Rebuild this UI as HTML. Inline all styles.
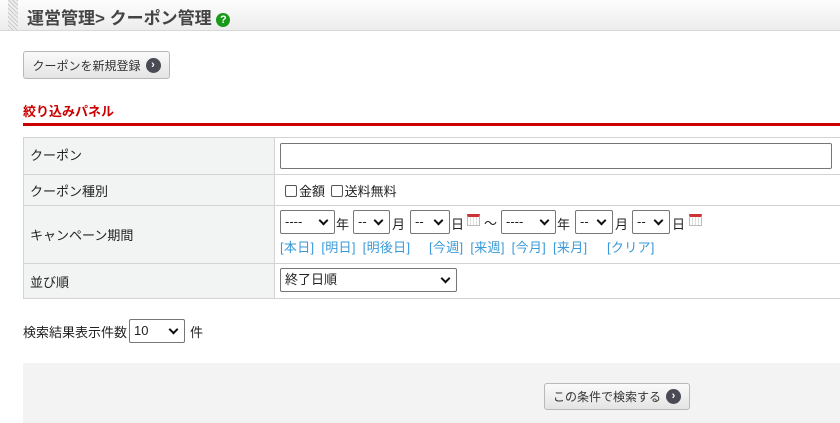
<!DOCTYPE html>
<html><head><meta charset="utf-8"><style>
*{box-sizing:border-box;margin:0;padding:0}
body{width:840px;height:423px;overflow:hidden;background:#fff;font-family:"Liberation Sans","Noto Sans CJK JP",sans-serif;font-size:13px;color:#222;position:relative}
.a{position:absolute}
.hdr{left:0;top:0;width:840px;height:31px;background:linear-gradient(#fdfdfd,#ececec);border-bottom:1px solid #d8d8d8}
.hatch{left:8px;top:0;width:10px;height:30px;background:repeating-linear-gradient(45deg,#ccc 0 1px,#eee 1px 3px)}
.btn{border:1px solid #b8b8b8;border-radius:3px;background:linear-gradient(#fafafa,#e4e4e4);font-size:12px;color:#333;display:flex;align-items:center;justify-content:center;gap:5px}
.ar{width:15px;height:15px;border-radius:50%;background:#4a4a55;color:#fff;font-size:11px;line-height:15px;text-align:center;font-weight:bold}
table{position:absolute;left:23px;top:137px;width:830px;border-collapse:collapse}
td{border:1px solid #d3d3d3;padding:0 6px;vertical-align:middle}
td.l{background:#f2f3f3;width:251px}
.sel{position:absolute;height:24px;border:1px solid #767676;border-radius:2px;background:#fff;font-size:13px;padding-left:4px;line-height:22px}
.sel:after{content:"";position:absolute;right:7px;top:6px;width:5px;height:5px;border-right:2px solid #111;border-bottom:2px solid #111;transform:rotate(45deg)}
.cal{position:absolute;width:13px;height:12px;border:1px solid #bbb;background:repeating-linear-gradient(90deg,#fff 0 2px,#ddd 2px 3px);border-top:3px solid #c33}
.lk{color:#3a9ad9;word-spacing:3px;letter-spacing:0.3px}
.cb{display:inline-block;width:12px;height:12px;border:1px solid #555;border-radius:2px;vertical-align:-1px;margin-right:2px}
</style></head><body>
<div class="a hdr"></div><div class="a hatch"></div>
<div class="a" style="left:27px;top:4px;font-size:17px;font-weight:bold;color:#444">運営管理&gt; クーポン管理 <span style="display:inline-block;width:14px;height:14px;border-radius:50%;background:#1a9a1a;color:#fff;font-size:11px;line-height:14px;text-align:center;vertical-align:1px">?</span></div>
<div class="a btn" style="left:23px;top:51px;width:147px;height:28px">クーポンを新規登録 <span class="ar">›</span></div>
<div class="a" style="left:23px;top:101px;color:#c00;font-weight:bold;font-size:13px">絞り込みパネル</div>
<div class="a" style="left:23px;top:123px;width:817px;height:3px;background:#c00"></div>
<table>
<tr style="height:37px"><td class="l" style="padding-bottom:3px">クーポン</td><td></td></tr>
<tr style="height:31px"><td class="l">クーポン種別</td><td style="padding-left:10px"><span class="cb"></span>金額 <span class="cb" style="margin-left:2px"></span>送料無料</td></tr>
<tr style="height:58px"><td class="l">キャンペーン期間</td><td></td></tr>
<tr style="height:35px"><td class="l">並び順</td><td></td></tr>
</table>
<div class="a" style="left:280px;top:143px;width:552px;height:26px;border:1px solid #767676;border-radius:2px"></div>
<div class="sel" style="left:280px;top:210px;width:55px">----</div><span class="a" style="left:336px;top:214px">年</span>
<div class="sel" style="left:353px;top:210px;width:37px">--</div><span class="a" style="left:392px;top:214px">月</span>
<div class="sel" style="left:410px;top:210px;width:40px">--</div><span class="a" style="left:451px;top:214px">日</span>
<div class="cal" style="left:467px;top:214px"></div><span class="a" style="left:484px;top:213px">～</span>
<div class="sel" style="left:501px;top:210px;width:55px">----</div><span class="a" style="left:557px;top:214px">年</span>
<div class="sel" style="left:575px;top:210px;width:38px">--</div><span class="a" style="left:615px;top:214px">月</span>
<div class="sel" style="left:632px;top:210px;width:38px">--</div><span class="a" style="left:672px;top:214px">日</span>
<div class="cal" style="left:689px;top:214px"></div>
<div class="a lk" style="left:280px;top:237px">[本日] [明日] [明後日]</div>
<div class="a lk" style="left:429px;top:237px">[今週] [来週] [今月] [来月]</div>
<div class="a lk" style="left:607px;top:237px">[クリア]</div>
<div class="sel" style="left:280px;top:268px;width:177px">終了日順</div>
<div class="a" style="left:23px;top:322px">検索結果表示件数</div>
<div class="sel" style="left:129px;top:319px;width:56px">10</div>
<div class="a" style="left:190px;top:322px">件</div>
<div class="a" style="left:23px;top:363px;width:817px;height:60px;background:#f3f3f3"></div>
<div class="a btn" style="left:544px;top:383px;width:146px;height:27px">この条件で検索する <span class="ar">›</span></div>
</body></html>
